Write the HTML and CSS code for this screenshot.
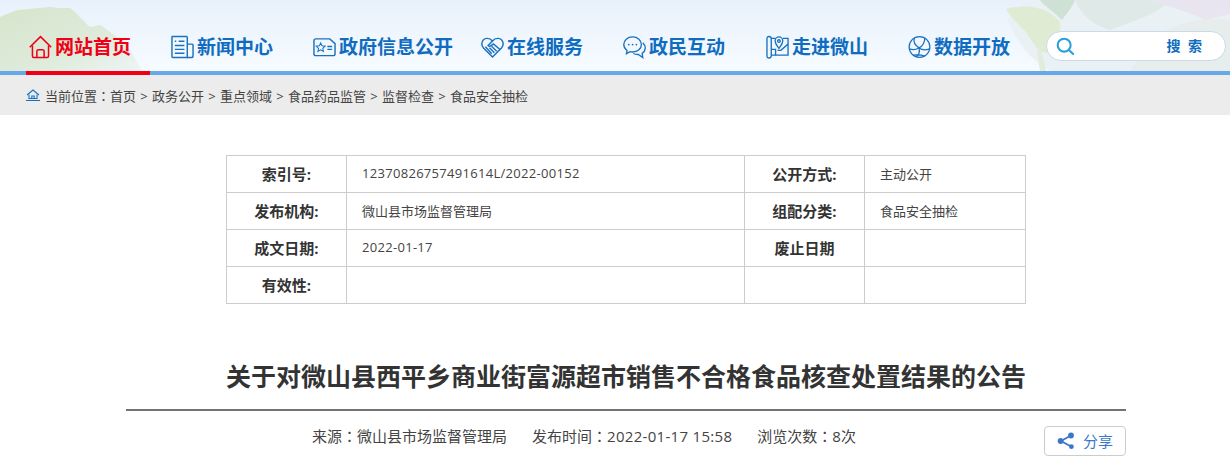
FILE: index.html
```html
<!DOCTYPE html>
<html lang="zh-CN">
<head>
<meta charset="utf-8">
<title>关于对微山县西平乡商业街富源超市销售不合格食品核查处置结果的公告</title>
<link rel="stylesheet" href="styles.css">
</head>
<body>
<header class="header">
  <svg class="scenery" width="1230" height="71" viewBox="0 0 1230 71" aria-hidden="true">
    <defs>
      <linearGradient id="hillFade" x1="0" y1="0" x2="1" y2="1">
        <stop offset="0" stop-color="#d6e4cc"/>
        <stop offset="0.6" stop-color="#dfebdb"/>
        <stop offset="1" stop-color="#edf5f6"/>
      </linearGradient>
    </defs>
    <path d="M0 17 C6 14 12 12 18 10 L50 7 L58 8 L70 8 C78 14 84 22 90 27 L100 25 C106 28 114 36 122 40 C130 48 136 60 142 71 L0 71Z" fill="url(#hillFade)"/>
    <g class="lotus">
      <path d="M1030 0 L1230 0 L1230 71 L1050 71 C1030 60 1015 40 1008 20 C1012 10 1022 4 1030 0Z" fill="#e9f1f4"/>
      <path d="M1006 9 C1030 2 1052 10 1060 22 C1062 30 1058 40 1050 52 C1040 56 1034 44 1026 32 C1018 24 1010 16 1006 9Z" fill="#dfebd3"/>
      <path d="M1040 0 L1075 0 C1072 8 1066 14 1062 20 C1052 10 1044 6 1040 0Z" fill="#cfe0d4"/>
      <path d="M1075 0 L1170 0 C1160 14 1130 22 1110 30 C1090 24 1080 12 1075 0Z" fill="#dfeae8"/>
      <path d="M1150 0 L1230 0 L1230 14 L1205 20 C1185 10 1165 6 1150 0Z" fill="#e9e5f0"/>
      <path d="M1150 40 C1175 22 1205 16 1230 20 L1230 71 L1130 71Z" fill="#e7ecec"/>
      <path d="M1041 50 C1043 58 1045 64 1046 71 L1040 71 C1039 64 1038 58 1037 50Z" fill="#e2ecdc"/>
    </g>
  </svg>
  <nav class="nav">
    <a class="nav-item nav-item-active" href="#">
      <svg class="nav-icon" viewBox="0 0 24 24" fill="none" stroke="#f00016" stroke-width="1.6">
        <path d="M0.8 12.3 L12 1.2 L23.2 12.3"/>
        <path d="M3.6 10.5 V21.5 Q3.6 23 5 23 H19 Q20.4 23 20.4 21.5 V10.5"/>
        <path d="M8.2 23 V16.5 Q8.2 14.8 10 14.8 H14 Q15.8 14.8 15.8 16.5 V23"/>
      </svg>
      <span>网站首页</span>
    </a>
    <a class="nav-item" href="#">
      <svg class="nav-icon" viewBox="0 0 24 24" fill="none" stroke="#1a72bf" stroke-width="1.5">
        <path d="M1 1.5 Q1 1 1.5 1 H16 Q17 1 17 2 V23 H2 Q1 23 1 22Z"/>
        <path d="M17 9 H22 Q23 9 23 10 V21 Q23 23 21 23 H17"/>
        <path d="M4 6 H5.5 M8 6 H14 M4 10.5 H14 M4 14.5 H14 M4 18.5 H14"/>
      </svg>
      <span>新闻中心</span>
    </a>
    <a class="nav-item nav-item-wide" href="#">
      <svg class="nav-icon" viewBox="0 0 24 24" fill="none" stroke="#1a72bf" stroke-width="1.5">
        <path d="M1 5.5 Q1 3.5 3 3.5 H17.5 L23 8.5 V19 Q23 21 21 21 H3 Q1 21 1 19Z"/>
        <path d="M8 7.8 L9.4 10.8 L12.6 11.2 L10.2 13.4 L10.9 16.6 L8 15 L5.1 16.6 L5.8 13.4 L3.4 11.2 L6.6 10.8Z" stroke-width="1.1"/>
        <path d="M15 11.5 H20 M15 14.5 H20" />
      </svg>
      <span>政府信息公开</span>
    </a>
    <a class="nav-item" href="#">
      <svg class="nav-icon" viewBox="0 0 24 24" fill="none" stroke="#1a72bf" stroke-width="1.5">
        <path d="M12 22.5 L2.6 13 C-0.5 9.6 0.8 3.4 6 3 C8.6 2.8 10.6 4 12 5.8 C13.4 4 15.4 2.8 18 3 C23.2 3.4 24.5 9.6 21.4 13Z"/>
        <path d="M12 5.8 L7.4 10.4 Q8.8 12 10.6 10.6 L13 8.8 L19.8 14.6"/>
        <path d="M4.6 11.8 L11.2 19 M8.8 12.8 L14 18 M11 11.2 L16.4 16.4"/>
      </svg>
      <span>在线服务</span>
    </a>
    <a class="nav-item" href="#">
      <svg class="nav-icon" viewBox="0 0 24 24" fill="none" stroke="#1a72bf" stroke-width="1.4">
        <path d="M10 1.5 C4.6 1.5 0.8 5 0.8 9.5 C0.8 12.2 2.2 14.2 4.2 15.6 L3.6 19 L7.4 16.9 C8.3 17.1 9.1 17.2 10 17.2 C15.4 17.2 19.2 13.8 19.2 9.5 C19.2 5 15.4 1.5 10 1.5Z"/>
        <path d="M20.6 7.5 C22.4 9.2 23.4 11 23.2 13.4 C23 16 21.6 17.6 20 18.6 L20.6 23 L16 19.8 C14 19.9 12.4 19.6 10.8 18.8"/>
        <circle cx="6" cy="9.5" r=".9" fill="#1a72bf" stroke="none"/>
        <circle cx="10" cy="9.5" r=".9" fill="#1a72bf" stroke="none"/>
        <circle cx="14" cy="9.5" r=".9" fill="#1a72bf" stroke="none"/>
      </svg>
      <span>政民互动</span>
    </a>
    <a class="nav-item nav-item-map" href="#">
      <svg class="nav-icon" viewBox="0 0 24 24" fill="none" stroke="#1a72bf" stroke-width="1.4">
        <path d="M1 3.5 Q1 1 3 1 Q5.5 1 5.5 3.5 V21 Q5.5 23.5 3 23.5 Q1 23.5 1 21Z"/>
        <path d="M5.5 3 H10 M17.5 3 H23 V20.5 H5.5"/>
        <path d="M13.5 13.5 C11 10 9.5 8.5 9.5 5.8 C9.5 3.3 11.3 1.5 13.5 1.5 C15.7 1.5 17.5 3.3 17.5 5.8 C17.5 8.5 16 10 13.5 13.5Z"/>
        <circle cx="13.5" cy="5.8" r="1.4"/>
        <path d="M5.5 14.5 L10 14.5 L10 20.5 M12 15.5 L15.5 15.5 L23 9"/>
      </svg>
      <span>走进微山</span>
    </a>
    <a class="nav-item" href="#">
      <svg class="nav-icon" viewBox="0 0 24 24" fill="none" stroke="#1a72bf" stroke-width="1.3">
        <circle cx="12" cy="12" r="10.8"/>
        <path d="M6.5 2.8 C5.5 7 7.5 10.5 11.5 13 C15 15.5 18.5 15.5 22.4 14"/>
        <path d="M17.5 2.6 C17.5 7 15 11 11.5 13 C8 15 4.5 15.3 1.4 14"/>
        <path d="M11.5 13 C12.5 17 11 20.5 9 22.4 M5 20.5 C9 20 13.5 20 17.5 21.5"/>
        <circle cx="11.5" cy="13" r="1.2" fill="#1a72bf" stroke="none"/>
      </svg>
      <span>数据开放</span>
    </a>
    <form class="search">
      <svg class="search-icon" viewBox="0 0 20 20" fill="none" stroke="#2aa0dc" stroke-width="2.2">
        <circle cx="8.6" cy="8.6" r="6.8"/>
        <path d="M13.6 13.6 L18 18" stroke-linecap="round"/>
      </svg>
      <button class="search-btn" type="button">搜 索</button>
    </form>
  </nav>
</header>
<div class="crumb">
  <svg class="crumb-icon" viewBox="0 0 14 12" fill="none" stroke="#1a72bf" stroke-width="1.1">
    <path d="M1 6 L7 1 L13 6"/>
    <path d="M3 5.5 V9.5 H11 V5.5 M5.8 9.5 V7 H8.2 V9.5"/>
    <path d="M0 11.5 H14"/>
  </svg>
  <span class="crumb-text">当前位置<span class="colon" lang="zh-TW">：</span>首页 &gt; 政务公开 &gt; 重点领域 &gt; 食品药品监管 &gt; 监督检查 &gt; 食品安全抽检</span>
</div>
<main class="main">
  <table class="info">
    <tr>
      <th>索引号:</th><td><span class="num">12370826757491614L/2022-00152</span></td>
      <th>公开方式:</th><td>主动公开</td>
    </tr>
    <tr>
      <th>发布机构:</th><td>微山县市场监督管理局</td>
      <th>组配分类:</th><td>食品安全抽检</td>
    </tr>
    <tr>
      <th>成文日期:</th><td><span class="num">2022-01-17</span></td>
      <th>废止日期</th><td></td>
    </tr>
    <tr>
      <th>有效性:</th><td></td>
      <th></th><td></td>
    </tr>
  </table>
  <h1 class="title">关于对微山县西平乡商业街富源超市销售不合格食品核查处置结果的公告</h1>
  <div class="meta">
    <span class="meta-item">来源<span class="colon" lang="zh-TW">：</span>微山县市场监督管理局</span>
    <span class="meta-item">发布时间<span class="colon" lang="zh-TW">：</span><span class="num">2022-01-17 15:58</span></span>
    <span class="meta-item">浏览次数<span class="colon" lang="zh-TW">：</span>8次</span>
    <a class="share" href="#">
      <svg class="share-icon" viewBox="0 0 18 18" fill="#3a78c6" stroke="#3a78c6" stroke-width="1.8">
        <path d="M14 3.5 L4 9 L14 14.5" fill="none"/>
        <circle cx="14" cy="3.5" r="2.9" stroke="none"/>
        <circle cx="3.6" cy="9" r="2.9" stroke="none"/>
        <circle cx="14.4" cy="14.7" r="2.4" stroke="none"/>
      </svg>
      <span>分享</span>
    </a>
  </div>
</main>
</body>
</html>
```
FILE: styles.css
```css
* { box-sizing: border-box; }
html, body { margin: 0; padding: 0; }
body {
  width: 1230px;
  height: 466px;
  overflow: hidden;
  background: #fff;
  color: #333;
  font-family: "Open Sans", "Noto Sans CJK SC", sans-serif;
}
a { color: inherit; text-decoration: none; }
.colon { font-family: "Noto Sans CJK TC", sans-serif; }
.num { letter-spacing: .3px; }

.header {
  position: relative;
  height: 75px;
  background: linear-gradient(180deg, #e8f1fb 0%, #f6fbff 100%);
  border-bottom: 4px solid #68a8e8;
}
.scenery { position: absolute; left: 0; top: 0; }

.nav {
  position: relative;
  display: flex;
  align-items: center;
  height: 71px;
  padding: 23px 0 0 29px;
  gap: 40px;
}
.nav-item {
  position: relative;
  display: flex;
  align-items: center;
  gap: 3px;
  height: 30px;
  font-size: 19px;
  font-weight: 700;
  line-height: 30px;
  color: #0f6cc0;
  white-space: nowrap;
}
.nav-item-active { color: #f00016; }
.nav-item-active::after {
  content: "";
  position: absolute;
  left: -3px;
  right: -19px;
  bottom: -13px;
  height: 4px;
  background: #f00016;
}
.nav-icon { width: 23px; height: 24px; flex: none; }
.nav-item-wide { margin-right: -12px; }
.nav-item-map { margin-left: 1px; }

.search {
  display: flex;
  align-items: center;
  justify-content: space-between;
  width: 180px;
  height: 30px;
  margin: -2px 0 0 -4px;
  padding: 0 23px 0 9px;
  background: #fff;
  border: 1px solid #c9dbe9;
  border-radius: 15px;
}
.search-icon { width: 19px; height: 19px; }
.search-btn {
  padding: 0;
  border: 0;
  background: none;
  font: 700 14px/20px "Open Sans", "Noto Sans CJK SC", sans-serif;
  word-spacing: 4px;
  color: #0f6cc0;
}

.crumb {
  display: flex;
  align-items: center;
  gap: 5px;
  height: 40px;
  padding-left: 26px;
  background: #ececec;
  font-size: 13px;
  color: #444;
}
.crumb-icon { width: 14px; height: 12px; }
.crumb-text { word-spacing: .9px; }

.main { width: 1000px; margin-left: 126px; }
.info {
  width: 799px;
  margin: 40px 0 0 100px;
  border-collapse: collapse;
  table-layout: fixed;
  font-size: 13px;
}
.info tr { height: 37px; }
.info th, .info td { border: 1px solid #ccc; padding: 0 0 2px; }
.info th {
  width: 120px;
  font-size: 15px;
  font-weight: 700;
  color: #333;
  text-align: center;
}
.info td { padding-left: 15px; color: #444; }
.info td:nth-child(2) { width: 398px; }
.info td:nth-child(4) { width: 161px; }

.title {
  height: 107px;
  margin: 0;
  padding-top: 54px;
  border-bottom: 2px solid #737373;
  font-size: 25px;
  line-height: 36px;
  font-weight: 700;
  color: #333;
  text-align: center;
  white-space: nowrap;
}
.meta {
  display: flex;
  align-items: flex-start;
  gap: 25px;
  height: 30px;
  margin-top: 15px;
  padding-left: 186px;
  font-size: 15px;
  line-height: 20px;
  color: #444;
}
.share {
  display: flex;
  align-items: center;
  gap: 8px;
  width: 82px;
  height: 30px;
  margin-left: auto;
  padding-left: 12px;
  border: 1px solid #ccc;
  border-radius: 4px;
  font-size: 15px;
  color: #3a78c6;
}
.share-icon { width: 18px; height: 18px; }
```
